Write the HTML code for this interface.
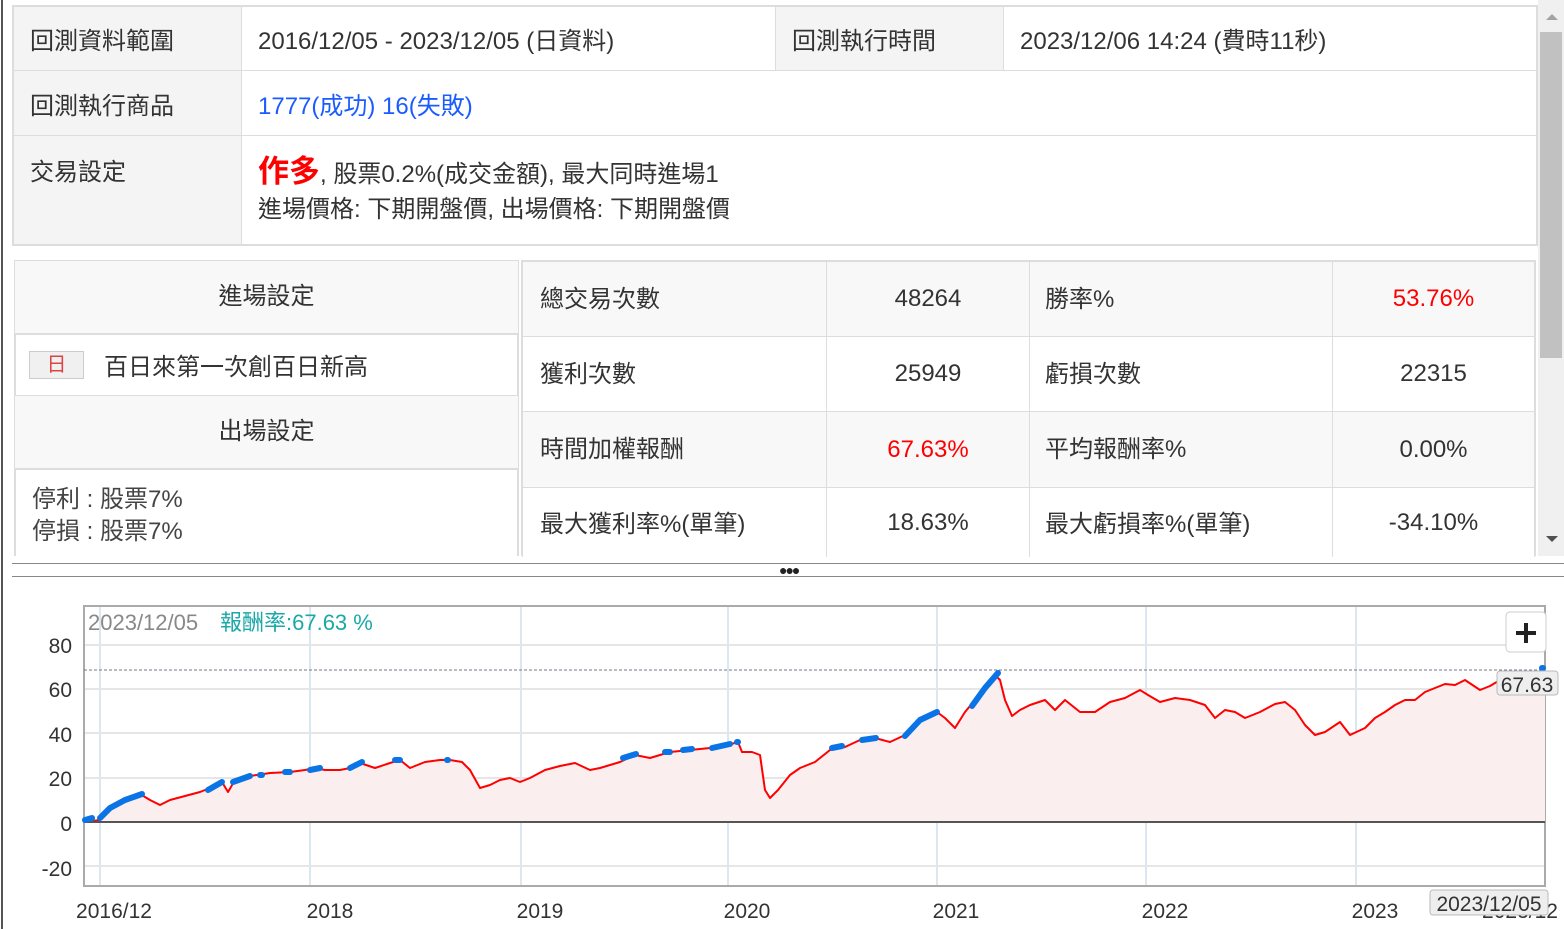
<!DOCTYPE html>
<html><head><meta charset="utf-8"><style>
*{margin:0;padding:0;box-sizing:border-box}
body{width:1564px;height:929px;overflow:hidden;background:#fff;font-family:"Liberation Sans","Noto Sans CJK TC",sans-serif;color:#333;position:relative}
.a{position:absolute}
.c{position:absolute;border:1px solid #ddd;font-size:24px;display:flex;align-items:center;white-space:nowrap}
.lb{background:#f4f4f4}
.g{background:#f8f8f8}
.cen{justify-content:center}
</style></head><body>
<div class="a" style="left:1px;top:0;width:2px;height:929px;background:#555"></div>
<!-- top table -->
<div class="a" style="left:12px;top:5px;width:1526px;height:241px;border:2px solid #ddd"></div>
<div class="c lb" style="left:13px;top:6px;width:229px;height:65px;padding-left:16px">回測資料範圍</div>
<div class="c" style="left:241px;top:6px;width:535px;height:65px;padding-left:16px">2016/12/05 - 2023/12/05 (日資料)</div>
<div class="c lb" style="left:775px;top:6px;width:229px;height:65px;padding-left:16px">回測執行時間</div>
<div class="c" style="left:1003px;top:6px;width:534px;height:65px;padding-left:16px">2023/12/06 14:24 (費時11秒)</div>
<div class="c lb" style="left:13px;top:70px;width:229px;height:66px;padding-left:16px">回測執行商品</div>
<div class="c" style="left:241px;top:70px;width:1296px;height:66px;padding-left:16px;color:#1a5cff">1777(成功) 16(失敗)</div>
<div class="c lb" style="left:13px;top:135px;width:229px;height:110px;padding-left:16px;align-items:flex-start;padding-top:16px">交易設定</div>
<div class="c" style="left:241px;top:135px;width:1296px;height:110px;padding-left:16px;display:block;padding-top:16px;line-height:40px">
<div><span style="color:#f00;font-size:31px;font-weight:bold">作多</span>, 股票0.2%(成交金額), 最大同時進場1</div>
<div style="line-height:30px">進場價格: 下期開盤價, 出場價格: 下期開盤價</div></div>
<!-- left settings -->
<div class="a" style="left:14px;top:260px;width:505px;height:296px;border:2px solid #ddd;border-bottom:none"></div>
<div class="c g cen" style="left:15px;top:261px;width:503px;height:74px;border-width:0 0 2px 0;padding-bottom:8px">進場設定</div>
<div class="c" style="left:15px;top:334px;width:503px;height:63px;border-width:0 0 2px 0;padding-left:14px"><span style="display:inline-block;width:55px;height:28px;border:1px solid #ccc;background:#f0f0f0;color:#d44;text-align:center;font-size:20px;line-height:26px;margin-right:20px">日</span>百日來第一次創百日新高</div>
<div class="c g cen" style="left:15px;top:396px;width:503px;height:74px;border-width:0 0 2px 0;padding-bottom:8px">出場設定</div>
<div class="a" style="left:32px;top:484px;font-size:24px;line-height:32px;color:#444">停利 : 股票7%<br>停損 : 股票7%</div>
<!-- stats -->
<div class="a" style="left:521px;top:260px;width:1015px;height:296px;border:2px solid #ddd;border-bottom:none"></div>
<div class="c g" style="left:522px;top:261px;width:305px;height:76px;padding-left:17px;align-items:flex-start;padding-top:17px">總交易次數</div>
<div class="c g cen" style="left:826px;top:261px;width:204px;height:76px">48264</div>
<div class="c g" style="left:1029px;top:261px;width:304px;height:76px;padding-left:15px;align-items:flex-start;padding-top:17px">勝率%</div>
<div class="c g cen" style="left:1332px;top:261px;width:203px;height:76px;color:#f00">53.76%</div>
<div class="c" style="left:522px;top:336px;width:305px;height:76px;padding-left:17px;align-items:flex-start;padding-top:17px">獲利次數</div>
<div class="c cen" style="left:826px;top:336px;width:204px;height:76px">25949</div>
<div class="c" style="left:1029px;top:336px;width:304px;height:76px;padding-left:15px;align-items:flex-start;padding-top:17px">虧損次數</div>
<div class="c cen" style="left:1332px;top:336px;width:203px;height:76px">22315</div>
<div class="c g" style="left:522px;top:411px;width:305px;height:77px;padding-left:17px;align-items:flex-start;padding-top:17px">時間加權報酬</div>
<div class="c g cen" style="left:826px;top:411px;width:204px;height:77px;color:#f00">67.63%</div>
<div class="c g" style="left:1029px;top:411px;width:304px;height:77px;padding-left:15px;align-items:flex-start;padding-top:17px">平均報酬率%</div>
<div class="c g cen" style="left:1332px;top:411px;width:203px;height:77px">0.00%</div>
<div class="c" style="left:522px;top:487px;width:305px;height:70px;padding-left:17px;align-items:flex-start;padding-top:16px;border-bottom:none">最大獲利率%(單筆)</div>
<div class="c cen" style="left:826px;top:487px;width:204px;height:70px;border-bottom:none">18.63%</div>
<div class="c" style="left:1029px;top:487px;width:304px;height:70px;padding-left:15px;align-items:flex-start;padding-top:16px;border-bottom:none">最大虧損率%(單筆)</div>
<div class="c cen" style="left:1332px;top:487px;width:203px;height:70px;border-bottom:none">-34.10%</div>
<!-- scrollbar -->
<div class="a" style="left:1538px;top:0;width:26px;height:556px;background:#f0f0f0"></div>
<div class="a" style="left:1540px;top:32px;width:22px;height:326px;background:#c1c1c1"></div>
<div class="a" style="left:1546px;top:14px;width:0;height:0;border:6px solid transparent;border-bottom-color:#a3a3a3;border-top:none"></div>
<div class="a" style="left:1546px;top:536px;width:0;height:0;border:6px solid transparent;border-top-color:#505050;border-bottom:none"></div>
<!-- splitter -->
<div class="a" style="left:12px;top:563px;width:1552px;height:1px;background:#888"></div>
<div class="a" style="left:12px;top:576px;width:1552px;height:1px;background:#888"></div>
<div class="a" style="left:779px;top:562px;font-size:14px;color:#222;letter-spacing:-2px;font-weight:bold">●●●</div>
<!-- chart -->
<svg class="a" style="left:0;top:580px" width="1564" height="349" viewBox="0 580 1564 349">
<g stroke="#e6e6e6" stroke-width="2">
<line x1="84" y1="645" x2="1545" y2="645"/><line x1="84" y1="689" x2="1545" y2="689"/><line x1="84" y1="733" x2="1545" y2="733"/><line x1="84" y1="778" x2="1545" y2="778"/><line x1="84" y1="866" x2="1545" y2="866"/></g>
<g stroke="#dbe8f2" stroke-width="2">
<line x1="100" y1="606" x2="100" y2="886"/><line x1="310" y1="606" x2="310" y2="886"/><line x1="521" y1="606" x2="521" y2="886"/><line x1="728" y1="606" x2="728" y2="886"/><line x1="937" y1="606" x2="937" y2="886"/><line x1="1146" y1="606" x2="1146" y2="886"/><line x1="1356" y1="606" x2="1356" y2="886"/></g>
<rect x="84" y="606" width="1461" height="280" fill="none" stroke="#aaa" stroke-width="2"/>
<line x1="84" y1="670" x2="1545" y2="670" stroke="#778" stroke-dasharray="3,2"/>
<polygon fill="#fbeeee" points="84,822 100,820 110,808 125,800 140,794 150,800 160,805 170,800 185,796 200,792 210,788 222,782 228,792 235,780 250,776 270,773 290,772 305,770 315,768 325,770 340,770 350,768 360,763 375,768 390,763 400,760 410,768 425,762 440,760 450,760 462,762 470,770 480,788 490,785 500,780 510,778 520,782 530,778 545,770 560,766 575,763 590,770 600,768 620,762 635,755 650,758 670,752 690,750 710,748 728,745 738,742 742,752 752,752 760,755 765,790 770,798 778,790 790,775 800,768 815,762 830,750 845,747 860,740 875,738 890,742 905,735 915,725 925,718 937,712 945,718 955,728 965,712 975,700 985,688 995,675 1000,680 1005,700 1012,716 1020,710 1030,705 1045,700 1055,710 1065,700 1080,712 1095,712 1110,702 1125,698 1140,690 1148,695 1160,702 1175,698 1190,700 1205,705 1215,718 1225,710 1235,712 1245,718 1260,712 1275,704 1285,702 1295,710 1305,725 1315,735 1325,732 1340,722 1350,735 1365,728 1375,718 1385,712 1395,705 1405,700 1415,700 1425,692 1435,688 1445,684 1455,685 1465,680 1480,690 1490,686 1500,680 1510,682 1520,678 1535,674 1545,672 1545,822"/>
<polyline fill="none" stroke="#f00" stroke-width="2" stroke-linejoin="round" points="84,822 100,820 110,808 125,800 140,794 150,800 160,805 170,800 185,796 200,792 210,788 222,782 228,792 235,780 250,776 270,773 290,772 305,770 315,768 325,770 340,770 350,768 360,763 375,768 390,763 400,760 410,768 425,762 440,760 450,760 462,762 470,770 480,788 490,785 500,780 510,778 520,782 530,778 545,770 560,766 575,763 590,770 600,768 620,762 635,755 650,758 670,752 690,750 710,748 728,745 738,742 742,752 752,752 760,755 765,790 770,798 778,790 790,775 800,768 815,762 830,750 845,747 860,740 875,738 890,742 905,735 915,725 925,718 937,712 945,718 955,728 965,712 975,700 985,688 995,675 1000,680 1005,700 1012,716 1020,710 1030,705 1045,700 1055,710 1065,700 1080,712 1095,712 1110,702 1125,698 1140,690 1148,695 1160,702 1175,698 1190,700 1205,705 1215,718 1225,710 1235,712 1245,718 1260,712 1275,704 1285,702 1295,710 1305,725 1315,735 1325,732 1340,722 1350,735 1365,728 1375,718 1385,712 1395,705 1405,700 1415,700 1425,692 1435,688 1445,684 1455,685 1465,680 1480,690 1490,686 1500,680 1510,682 1520,678 1535,674 1545,672"/>
<line x1="84" y1="822" x2="1545" y2="822" stroke="#555" stroke-width="2"/>
<g fill="none" stroke="#0a74e6" stroke-width="6" stroke-linecap="round" stroke-linejoin="round">
<polyline points="85,820 92,818"/><polyline points="100,818 110,808 125,800 142,794"/>
<polyline points="208,790 222,782"/><polyline points="233,782 250,776"/><polyline points="260,775 262,775"/><polyline points="285,772 290,772"/>
<polyline points="310,770 320,768"/><polyline points="350,768 362,762"/><polyline points="395,760 400,760"/><polyline points="447,760 448,760"/>
<polyline points="623,758 636,754"/><polyline points="665,752 670,752"/><polyline points="683,750 692,749"/><polyline points="712,748 730,744"/><polyline points="737,742 738,742"/>
<polyline points="832,748 842,746"/><polyline points="862,740 876,738"/><polyline points="905,736 920,720 937,712"/>
<polyline points="972,706 985,688 998,673"/><polyline points="1542,668 1543,668"/>
</g>
<g font-size="21" fill="#333" text-anchor="end"><text x="72" y="653">80</text><text x="72" y="697">60</text><text x="72" y="742">40</text><text x="72" y="786">20</text><text x="72" y="831">0</text><text x="72" y="876">-20</text></g>
<g font-size="21" fill="#333" text-anchor="middle"><text x="114" y="918">2016/12</text><text x="330" y="918">2018</text><text x="540" y="918">2019</text><text x="747" y="918">2020</text><text x="956" y="918">2021</text><text x="1165" y="918">2022</text><text x="1375" y="918">2023</text><text x="1520" y="918">2023/12</text></g>
<text x="88" y="630" font-size="22" fill="#888">2023/12/05</text>
<text x="220" y="630" font-size="22" fill="#1aa8a8">報酬率:67.63 %</text>
<rect x="1506" y="612" width="40" height="40" rx="4" fill="#fff" stroke="#ccc"/>
<path d="M1526 623v20M1516 633h20" stroke="#222" stroke-width="4"/>
<rect x="1497" y="671" width="61" height="24" rx="3" fill="#eee" stroke="#bbb"/>
<text x="1527" y="692" font-size="21" fill="#333" text-anchor="middle">67.63</text>
<rect x="1430" y="890" width="118" height="25" rx="3" fill="#eee" stroke="#bbb"/>
<text x="1489" y="911" font-size="21" fill="#333" text-anchor="middle">2023/12/05</text>
</svg>
</body></html>
